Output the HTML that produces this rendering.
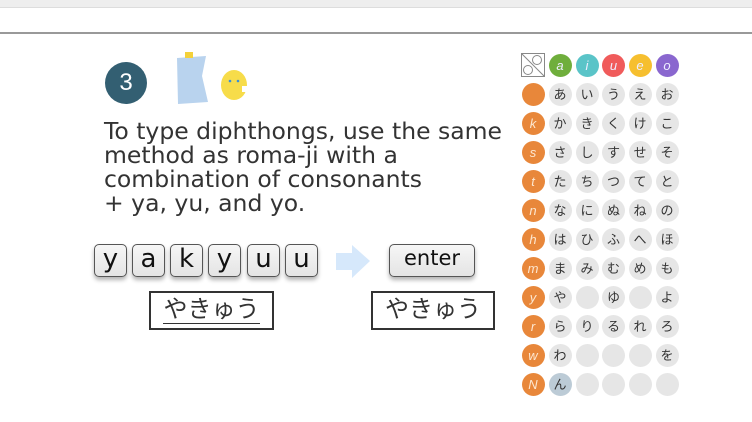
<!DOCTYPE html><html><head><style>
body{margin:0;width:752px;height:422px;background:#fff;position:relative;overflow:hidden;font-family:"Liberation Sans","Noto Sans CJK JP",sans-serif}
.a{position:absolute}
.key{position:absolute;top:244px;width:31px;height:31px;border:1.5px solid #555;border-radius:5px;background:linear-gradient(#f6f6f6,#e4e4e4);box-shadow:0 3px 4px rgba(0,0,0,.3);font-family:"DejaVu Sans",sans-serif;font-size:26px;line-height:28px;text-align:center;color:#111}
.c{position:absolute;width:23px;height:23px;border-radius:50%;background:#e6e6e6;font-size:13px;line-height:23px;text-align:center;color:#333}
.o{background:#e8873a;color:#fde7d0;font-style:italic;font-size:13px}
</style></head><body>
<div class="a" style="left:0;top:0;width:752px;height:7px;background:#eee;border-bottom:1px solid #ddd"></div>
<div class="a" style="left:0;top:32px;width:752px;height:2px;background:#999"></div>
<div class="a" style="left:105px;top:62px;width:42px;height:42px;border-radius:50%;background:#335f72;color:#fff;font-size:24px;line-height:42px;text-align:center">3</div>
<svg class="a" style="left:172px;top:48px" width="80" height="58"><polygon points="5,10 34,8 30,28 36,54 6,56" fill="#b9d3ee"/><rect x="13" y="4" width="8" height="6" fill="#f4d13a"/><ellipse cx="62" cy="37" rx="13" ry="15" fill="#f7dc4a"/><rect x="70" y="38" width="8" height="6" fill="#fff"/><circle cx="58" cy="33" r="1.3" fill="#3a8fd6"/><circle cx="66" cy="33" r="1.3" fill="#3a8fd6"/></svg>
<div class="a" style="left:104px;top:119px;font-family:'DejaVu Sans',sans-serif;font-size:23.5px;line-height:24px;color:#333;width:440px;white-space:nowrap">To type diphthongs, use the same<br>method as roma-ji with a<br>combination of consonants<br>+ ya, yu, and yo.</div>
<div class="key" style="left:94px">y</div><div class="key" style="left:132px">a</div><div class="key" style="left:170px">k</div><div class="key" style="left:208px">y</div><div class="key" style="left:247px">u</div><div class="key" style="left:285px">u</div>
<svg class="a" style="left:336px;top:245px" width="35" height="33"><polygon points="0,8 16,8 16,0 34,16 16,33 16,25 0,25" fill="#d6e8fb"/></svg>
<div class="key" style="left:389px;width:84px;font-size:21px;line-height:26px">enter</div>
<div class="a" style="left:149px;top:291px;width:121px;height:35px;border:2px solid #333;font-size:24px;line-height:33px;text-align:center;color:#333">やきゅう</div>
<div class="a" style="left:163px;top:323px;width:97px;height:1px;background:#333"></div>
<div class="a" style="left:371px;top:291px;width:120px;height:35px;border:2px solid #333;font-size:24px;line-height:33px;text-align:center;color:#333">やきゅう</div>
<svg class="a" style="left:521px;top:53px" width="24" height="24"><rect x="0.5" y="0.5" width="23" height="23" fill="#fff" stroke="#888"/><line x1="0" y1="0" x2="24" y2="24" stroke="#888"/><circle cx="16" cy="7" r="4.5" fill="none" stroke="#888"/><circle cx="7" cy="17" r="4.5" fill="none" stroke="#888"/></svg>
<div id="g"></div>
<script>
var cols=[521.5,548.5,575.5,602,628.5,655.5],rows=[53.5,82.5,111.5,140.5,169.5,198.5,227.5,256.5,285.5,314.5,343.5,372.5];
var hdr=[["a","#6fae3c"],["i","#5ac4c8"],["u","#f05b5b"],["e","#f6bf2f"],["o","#8a67cf"]];
var cons=["","k","s","t","n","h","m","y","r","w","N"];
var kana=["あいうえお","かきくけこ","さしすせそ","たちつてと","なにぬねの","はひふへほ","まみむめも","や ゆ よ","らりるれろ","わ   を","ん    "];
var h="";
hdr.forEach(function(x,i){h+='<div class="c" style="left:'+cols[i+1]+'px;top:'+rows[0]+'px;background:'+x[1]+';color:#eef;font-style:italic;font-size:13px">'+x[0]+'</div>';});
for(var r=0;r<11;r++){h+='<div class="c o" style="left:'+cols[0]+'px;top:'+rows[r+1]+'px">'+cons[r]+'</div>';
for(var c=0;c<5;c++){var k=kana[r][c]||" ";h+='<div class="c" style="left:'+cols[c+1]+'px;top:'+rows[r+1]+'px'+(r==10&&c==0?';background:#bccbd6':'')+'">'+(k==" "?"":k)+'</div>';}}
document.getElementById("g").innerHTML=h;
</script>
</body></html>
